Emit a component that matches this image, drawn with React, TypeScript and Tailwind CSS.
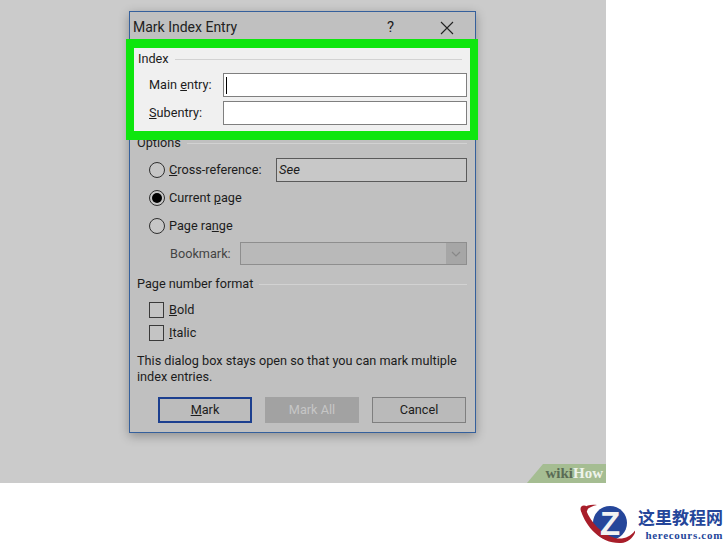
const font = "font-['Roboto',sans-serif]";

function Radio({ checked }: { checked?: boolean }) {
  return (
    <span className="flex h-[16px] w-[16px] shrink-0 items-center justify-center rounded-full border border-[#2f2f2f] bg-[#c6c6c6]">
      {checked ? <span className="h-[10px] w-[10px] rounded-full bg-black" /> : null}
    </span>
  );
}

function CheckRow({ children }: { children: React.ReactNode }) {
  return (
    <div className="flex h-[16px] items-center gap-[5px] pl-[19px]">
      <span className="h-[16px] w-[15px] shrink-0 border border-[#3a3a3a] bg-[#c4c4c4]" />
      <span>{children}</span>
    </div>
  );
}

function SectionLabel({ label, className }: { label: string; className?: string }) {
  return (
    <div className={`flex h-[16px] items-center gap-[6px] pl-[7px] pr-[8px] ${className ?? ''}`}>
      <span className="whitespace-nowrap">{label}</span>
      <span className="h-px flex-1 bg-[#d2d2d2]" />
    </div>
  );
}

function DialogButton({ children, className }: { children: React.ReactNode; className: string }) {
  return (
    <div className={`flex h-[26px] w-[94px] items-center justify-center ${className}`}>{children}</div>
  );
}

function Logo() {
  return (
    <div className="flex items-center gap-[3px]">
      <svg width="58" height="44" viewBox="0 0 58 44">
        <circle cx="33" cy="21" r="17" fill="#25469a" />
        <path d="M4 9 C9 25 24 42 44 41 C52 40 58 34 59 27 C54 35 46 38 38 36 C25 32 14 21 9 8 Z" fill="#a81e2a" />
        <path d="M6 6 C10 3 15 2 20 3 C15 4 11 6 9 9 Z" fill="#a81e2a" />
        <circle cx="7" cy="7" r="3.5" fill="#a81e2a" />
        <text x="33" y="33" textAnchor="middle" fontSize="33" fontWeight="700" fill="#f2f2f2" fontFamily="'Liberation Sans',sans-serif">Z</text>
      </svg>
      <div className="flex flex-col items-end">
        <span className="whitespace-nowrap text-[17px] leading-[20px] font-bold text-[#25469a] font-['Noto_Sans_CJK_SC',sans-serif]">这里教程网</span>
        <span className="mt-[1px] whitespace-nowrap text-[11px] leading-[14px] font-bold tracking-[0.7px] text-[#25469a] font-['Liberation_Serif',serif]">herecours.com</span>
      </div>
    </div>
  );
}

export default function App() {
  return (
    <div className={`h-[546px] w-[728px] overflow-hidden bg-white ${font} text-[12.7px] text-[#1c1c1c]`}>
      <div className="relative h-[483px] w-[606px] overflow-hidden bg-[#cbcbcb] pl-[129px] pt-[11px]">
        <div className="h-[422px] w-[347px] border border-[#35609c] bg-[#c0c0c0] shadow-[0_3px_10px_rgba(0,0,0,0.3)]">
          <div className="flex h-[27px] items-center pl-[3px] pt-[4px]">
            <span className="w-[254px] text-[14px] text-[#222]">Mark Index Entry</span>
            <span className="text-[15px]">?</span>
            <svg className="ml-[46px]" width="14" height="14" viewBox="0 0 14 14">
              <path d="M1 1 L13 13 M13 1 L1 13" stroke="#222" strokeWidth="1.1" fill="none" />
            </svg>
          </div>

          <div className="relative z-10 -ml-[4px] h-[101px] w-[352px] border-x-[8px] border-y-[9px] border-[#0ee60e] bg-[#f0f0f0] pt-[3px]">
            <SectionLabel label="Index" className="-ml-[3px]" />
            <div className="mt-[6px] flex h-[24px] items-center pl-[6px] pr-[3px]">
              <span className="w-[83px] pl-[9px]">Main <u>e</u>ntry:</span>
              <div className="flex h-[24px] flex-1 items-center border border-[#7f7f7f] bg-white pl-[2px]">
                <span className="h-[17px] w-px bg-black" />
              </div>
            </div>
            <div className="mt-[4px] flex h-[24px] items-center pl-[6px] pr-[3px]">
              <span className="w-[83px] pl-[9px]"><u>S</u>ubentry:</span>
              <div className="h-[24px] flex-1 border border-[#7f7f7f] bg-white" />
            </div>
          </div>

          <SectionLabel label="Options" className="-mt-[5px]" />

          <div className="mt-[7px] flex h-[24px] items-center pl-[19px] pr-[8px]">
            <Radio />
            <span className="ml-[4px] w-[107px]"><u>C</u>ross-reference:</span>
            <div className="flex h-[24px] flex-1 items-center border border-[#5a5a5a] bg-[#c8c8c8] pl-[2px] text-[13px] italic">See</div>
          </div>
          <div className="mt-[8px] flex h-[16px] items-center gap-[4px] pl-[19px]">
            <Radio checked />
            <span>Current <u>p</u>age</span>
          </div>
          <div className="mt-[12px] flex h-[16px] items-center gap-[4px] pl-[19px]">
            <Radio />
            <span>Page ra<u>n</u>ge</span>
          </div>
          <div className="mt-[8px] flex h-[23px] items-center pl-[40px] pr-[8px]">
            <span className="w-[70px] text-[#444]">Bookmark:</span>
            <div className="flex h-[23px] flex-1 justify-end border border-[#8e8e8e] bg-[#b9b9b9]">
              <div className="flex w-[20px] items-center justify-center bg-[#a6a6a6]">
                <svg width="10" height="6" viewBox="0 0 10 6">
                  <path d="M1 1 L5 5 L9 1" stroke="#888" strokeWidth="1.2" fill="none" />
                </svg>
              </div>
            </div>
          </div>

          <SectionLabel label="Page number format" className="mt-[11px]" />

          <div className="mt-[10px]">
            <CheckRow><u>B</u>old</CheckRow>
          </div>
          <div className="mt-[7px]">
            <CheckRow><u>I</u>talic</CheckRow>
          </div>

          <p className="mt-[12px] pl-[7px] pr-[8px] leading-[16px]">
            This dialog box stays open so that you can mark multiple
            <br />
            index entries.
          </p>

          <div className="mt-[12px] flex gap-[13px] pl-[28px]">
            <DialogButton className="border-2 border-[#1c3f8f] bg-[#bcbcbc]"><span><u>M</u>ark</span></DialogButton>
            <DialogButton className="bg-[#a2a2a2] text-[#c6c6c6]">Mark All</DialogButton>
            <DialogButton className="border border-[#7f7f7f] bg-[#bababa]">Cancel</DialogButton>
          </div>
        </div>

        <div className="absolute bottom-0 right-0 flex h-[19px] w-[79px] items-center justify-end bg-[#a5bd92] pr-[3px] text-[15px] leading-none font-bold font-['Liberation_Serif',serif] [clip-path:polygon(16px_0,100%_0,100%_100%,0_100%)]">
          <span className="text-[#5a6b55]">wiki</span>
          <span className="text-[#eef3ea]">How</span>
        </div>
      </div>

      <div className="flex justify-end pr-[5px] pt-[19px]">
        <Logo />
      </div>
    </div>
  );
}
